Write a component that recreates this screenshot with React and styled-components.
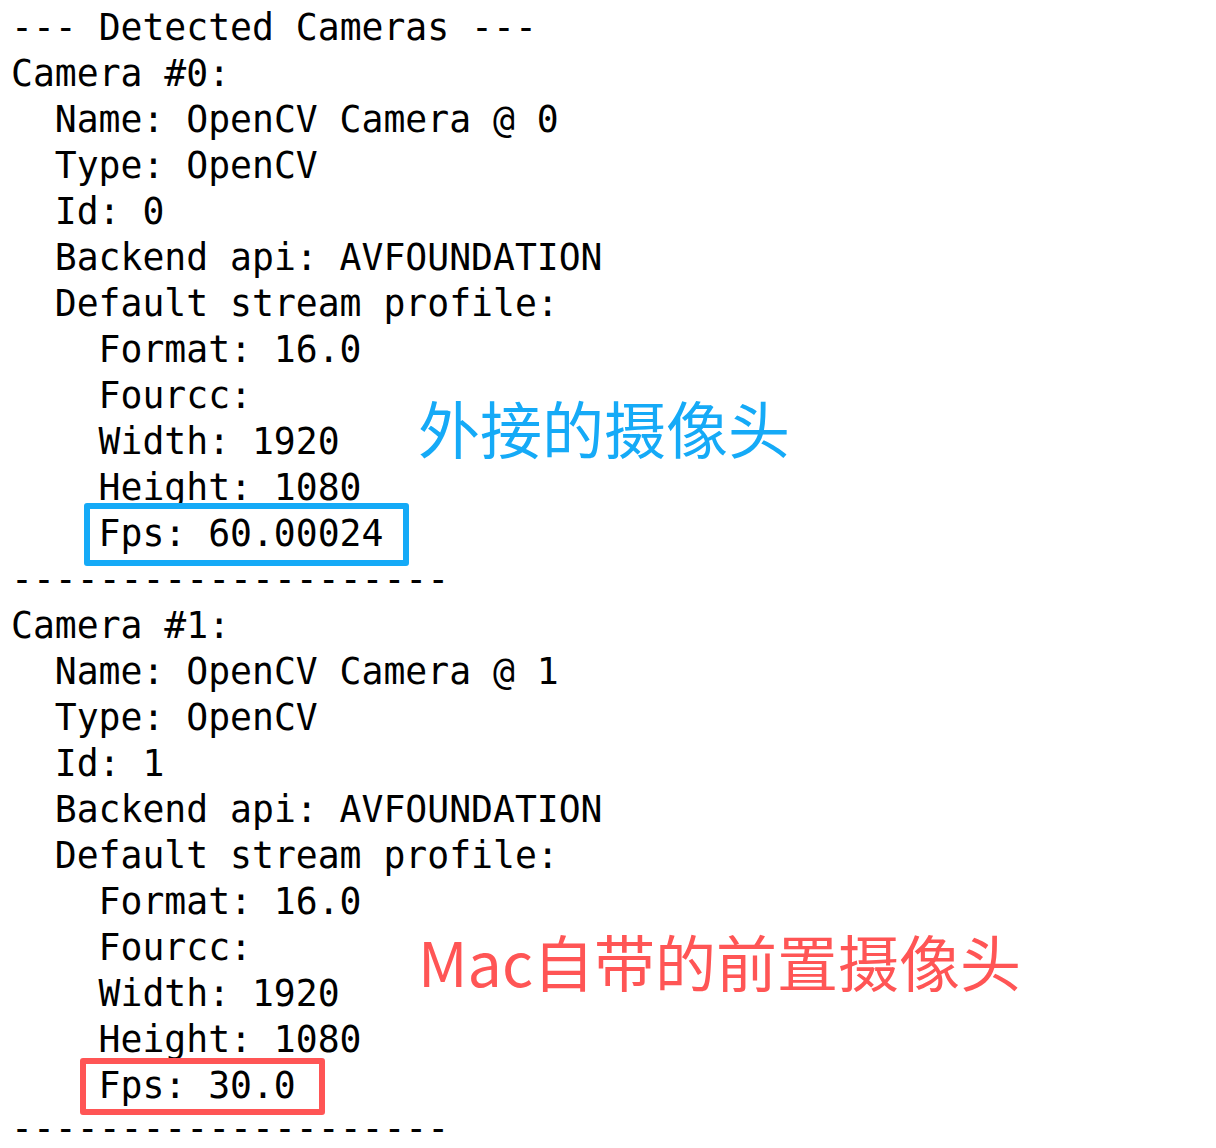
import * as React from "react";
import styled, { createGlobalStyle } from 'styled-components';

const GlobalStyle = createGlobalStyle`
  html, body {
    margin: 0;
    padding: 0;
    background: #ffffff;
  }
`;

const Terminal = styled.div`
  position: relative;
  padding: 5px 0 0 11px;
  font-family: "DejaVu Sans Mono", "Liberation Mono", monospace;
  font-size: 36.4px;
  line-height: 46px;
  color: #000;
  height: 1148px;
  box-sizing: border-box;
  overflow: hidden;
`;

const Line = styled.div`
  white-space: pre;
  height: ${p => (p.$tight ? 40 : 46)}px;
  line-height: ${p => (p.$tight ? 40 : 46)}px;
  padding-left: ${p => p.$indent * 21.9}px;
`;

const Highlight = styled.span`
  position: relative;
  display: inline-block;
  line-height: 46px;
  &::before {
    content: "";
    position: absolute;
    top: ${p => p.$box[0]}px;
    right: ${p => p.$box[1]}px;
    bottom: ${p => p.$box[2]}px;
    left: ${p => p.$box[3]}px;
    border: 6px solid ${p => p.$color};
    border-radius: 3px;
  }
`;

const Note = styled.div`
  position: absolute;
  left: 418px;
  top: ${p => p.$top}px;
  font-family: "Noto Sans CJK SC", "Noto Sans", sans-serif;
  font-size: ${p => p.$size}px;
  line-height: 62px;
  color: ${p => p.$color};
  white-space: nowrap;
`;

const BLUE = '#15aaf7';
const RED = '#ff5555';

const cameras = [
  { id: 0, fps: '60.00024', color: BLUE, box: [-8, -26, -9, -15] },
  { id: 1, fps: '30.0', color: RED, box: [-5, -29, -6, -19] },
];

const Camera = ({ cam, last }) => (
  <>
    <Line $indent={0}>Camera #{cam.id}:</Line>
    <Line $indent={2}>Name: OpenCV Camera @ {cam.id}</Line>
    <Line $indent={2}>Type: OpenCV</Line>
    <Line $indent={2}>Id: {cam.id}</Line>
    <Line $indent={2}>Backend api: AVFOUNDATION</Line>
    <Line $indent={2}>Default stream profile:</Line>
    <Line $indent={4}>Format: 16.0</Line>
    <Line $indent={4}>Fourcc:</Line>
    <Line $indent={4}>Width: 1920</Line>
    <Line $indent={4}>Height: 1080</Line>
    <Line $indent={4}>
      <Highlight $color={cam.color} $box={cam.box}>Fps: {cam.fps}</Highlight>
    </Line>
    <Line $indent={0} $tight={last}>--------------------</Line>
  </>
);

const App = () => {
  return (
    <>
      <GlobalStyle />
      <Terminal>
        <Line $indent={0}>--- Detected Cameras ---</Line>
        { cameras.map((cam, i) => (
          <Camera key={ `cam${cam.id}` } cam={cam} last={i === cameras.length - 1} />
        )) }
        <Note $top={396} $size={62} $color={BLUE}>外接的摄像头</Note>
        <Note $top={930} $size={61} $color={RED}>Mac自带的前置摄像头</Note>
      </Terminal>
    </>
  );
};

export default App;
